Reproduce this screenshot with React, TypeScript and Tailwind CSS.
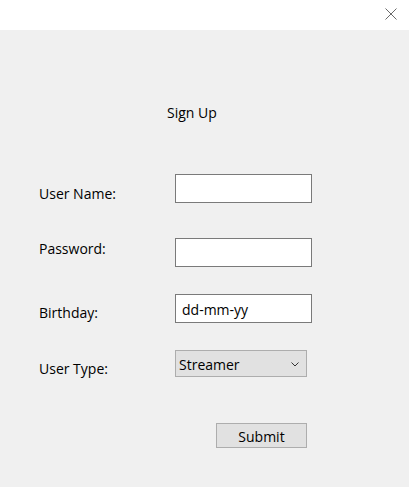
export default function App() {
  return (
    <div className="h-[487px] w-[409px] overflow-hidden bg-[#f0f0f0] font-['Open_Sans',sans-serif] text-[14px] leading-[19px] text-black">
      {/* title bar */}
      <div className="flex h-[30px] justify-end bg-white">
        <svg
          className="mr-[12px] mt-[8px]"
          width="12"
          height="12"
          viewBox="0 0 12 12"
          fill="none"
          stroke="#6a6a6a"
          strokeWidth="1"
        >
          <path d="M0.5 0.5L11.5 11.5M11.5 0.5L0.5 11.5" />
        </svg>
      </div>

      <div className="flex flex-col">
        <div className="ml-[167px] mt-[73px] h-[19px]">Sign Up</div>

        <div className="mt-[52px] flex h-[29px] items-start">
          <div className="ml-[39px] mt-[9.5px] w-[136px]">User Name:</div>
          <input
            type="text"
            className="h-[29px] w-[137px] border border-[#7a7a7a] bg-white px-[6px] outline-none"
          />
        </div>

        <div className="mt-[35px] flex h-[29px] items-start">
          <div className="ml-[39px] mt-[1px] w-[136px]">Password:</div>
          <input
            type="password"
            className="h-[29px] w-[137px] border border-[#7a7a7a] bg-white px-[6px] outline-none"
          />
        </div>

        <div className="mt-[27px] flex h-[29px] items-start">
          <div className="ml-[39px] mt-[9px] w-[136px]">Birthday:</div>
          <input
            type="text"
            defaultValue="dd-mm-yy"
            className="h-[29px] w-[137px] border border-[#7a7a7a] bg-white px-[6px] pt-[1px] text-[14px] outline-none"
          />
        </div>

        <div className="mt-[27px] flex h-[27px] items-start">
          <div className="ml-[39px] mt-[9px] w-[136px]">User Type:</div>
          <div className="flex h-[27px] w-[132px] items-center justify-between border border-[#adadad] bg-[#e1e1e1] pl-[3px] pr-[7px] pt-[1px]">
            <span>Streamer</span>
            <svg width="8" height="5" viewBox="0 0 8 5" fill="none" stroke="#333" strokeWidth="1">
              <path d="M0.5 0.5L4 4L7.5 0.5" />
            </svg>
          </div>
        </div>

        <div className="mt-[46px] flex">
          <button className="ml-[216px] h-[25px] w-[91px] border border-[#adadad] bg-[#e1e1e1] pt-[1px] leading-[19px]">
            Submit
          </button>
        </div>
      </div>
    </div>
  );
}
